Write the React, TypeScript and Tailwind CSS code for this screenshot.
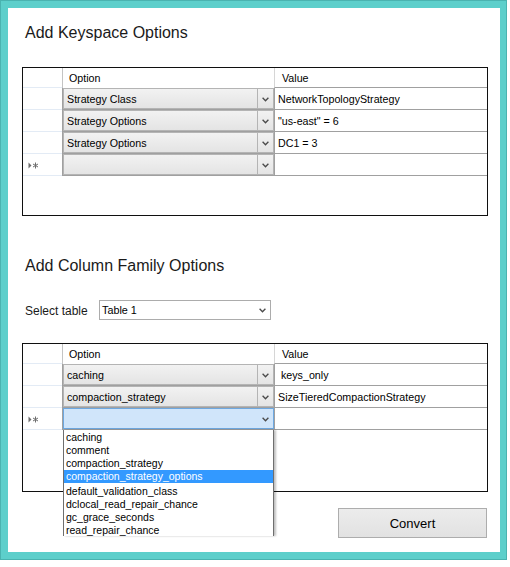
import React from "react";

const Chevron = () => (
  <svg width="7" height="5" viewBox="0 0 7 5">
    <path d="M0.6 0.8 L3.5 3.8 L6.4 0.8" fill="none" stroke="#4a4a4a" strokeWidth="1.3" />
  </svg>
);

const NewRowIcon = () => (
  <svg width="11" height="7" viewBox="0 0 11 7">
    <path d="M0.5 0.5 L0.5 6.5 L3.5 3.5 Z" fill="#6e6e6e" />
    <g stroke="#6e6e6e" strokeWidth="1">
      <line x1="7.5" y1="0.5" x2="7.5" y2="6.5" />
      <line x1="5" y1="2" x2="10" y2="5" />
      <line x1="5" y1="5" x2="10" y2="2" />
    </g>
  </svg>
);

type Row = { option: string; value: string; newRow?: boolean; selected?: boolean };

const GridRow = ({ option, value, newRow, selected }: Row) => (
  <div className="flex h-[22px]">
    <div className="w-[39px] border-b border-[#e3ebf5] flex items-center pl-[5px] pt-[1px]">
      {newRow && <NewRowIcon />}
    </div>
    <div className="w-[212px] border-l border-b border-[#a0a0a0]">
      <div
        className={
          selected
            ? "h-full flex border border-[#6ea8e0] bg-[#d0e5fa]"
            : "h-full flex border border-[#b4b4b4] bg-gradient-to-b from-[#f2f2f2] to-[#e4e4e4]"
        }
      >
        <div className="flex-1 pl-[3px] pt-[1px] flex items-center whitespace-nowrap overflow-hidden">{option}</div>
        <div
          className={
            selected
              ? "w-[16px] flex items-center justify-center pt-[1px]"
              : "w-[16px] border-l border-[#b4b4b4] flex items-center justify-center pt-[1px]"
          }
        >
          <Chevron />
        </div>
      </div>
    </div>
    <div className="w-[213px] border-l border-b border-[#a0a0a0] pl-[3px] pt-[1px] flex items-center whitespace-pre">
      {value}
    </div>
  </div>
);

const Grid = ({ rows, children }: { rows: Row[]; children?: React.ReactNode }) => (
  <div className="relative w-[466px] h-[149px] border border-[#101010] bg-white flex flex-col text-[10.7px] text-black">
    <div className="flex h-[20px]">
      <div className="w-[39px] border-b border-[#e3ebf5]" />
      <div className="w-[212px] border-l border-[#c4c4c4] pl-[6px] pt-[1px] flex items-center">Option</div>
      <div className="w-[213px] border-l border-b border-[#d6d6d6] border-b-[#a0a0a0] pl-[7px] pt-[1px] flex items-center">
        Value
      </div>
    </div>
    {rows.map((r, i) => (
      <GridRow key={i} {...r} />
    ))}
    {children}
  </div>
);

const listItems = [
  "caching",
  "comment",
  "compaction_strategy",
  "compaction_strategy_options",
  "default_validation_class",
  "dclocal_read_repair_chance",
  "gc_grace_seconds",
  "read_repair_chance",
];

export default function App() {
  return (
    <div className="font-['Liberation_Sans',Arial,sans-serif] bg-white w-[510px] h-[567px]">
      <div className="w-[507px] h-[560px] border border-[#4ab3b0] bg-[#5dcfcb] pl-[7px] pt-[7px]">
        <div className="w-[492px] h-[544px] bg-white pl-[14px] flex flex-col">
          <div className="mt-[15px] h-[20px] leading-[20px] pl-[3px] text-[16px] text-[#1a1a1a]">
            Add Keyspace Options
          </div>
          <div className="mt-[24px]">
            <Grid
              rows={[
                { option: "Strategy Class", value: "NetworkTopologyStrategy" },
                { option: "Strategy Options", value: "\"us-east\" = 6" },
                { option: "Strategy Options", value: "DC1 = 3" },
                { option: "", value: "", newRow: true },
              ]}
            />
          </div>
          <div className="mt-[40px] h-[20px] leading-[20px] pl-[3px] text-[16px] text-[#1a1a1a]">
            Add Column Family Options
          </div>
          <div className="mt-[24px] h-[20px] flex items-center">
            <div className="w-[77px] pl-[3px] pt-[1px] text-[12px] text-[#1a1a1a]">Select table</div>
            <div className="w-[172px] h-[20px] border border-[#acacac] bg-white flex items-center text-[10.8px]">
              <div className="flex-1 pl-[2px] pt-[1px]">Table 1</div>
              <div className="w-[16px] flex items-center justify-center">
                <Chevron />
              </div>
            </div>
          </div>
          <div className="mt-[23px]">
            <Grid
              rows={[
                { option: "caching", value: " keys_only" },
                { option: "compaction_strategy", value: "SizeTieredCompactionStrategy" },
                { option: "", value: "", newRow: true, selected: true },
              ]}
            >
              <div className="absolute left-[40px] top-[86px] w-[211px] h-[106px] pt-[1px] bg-white border-l border-r border-[#6e6e6e] shadow-[2px_0_2px_rgba(0,0,0,0.25)] text-[10.5px] z-10">
                {listItems.map((it) => (
                  <div
                    key={it}
                    className={
                      it === "compaction_strategy_options"
                        ? "h-[13px] leading-[13px] pl-[2px] bg-[#3399ff] text-white mb-[2px] whitespace-nowrap"
                        : "h-[13px] leading-[13px] pl-[2px] text-black whitespace-nowrap"
                    }
                  >
                    {it}
                  </div>
                ))}
              </div>
            </Grid>
          </div>
          <div className="mt-[16px] w-[466px] flex justify-end">
            <div className="w-[149px] h-[30px] mr-[1px] pt-[1px] border border-[#adadad] bg-gradient-to-b from-[#ececec] to-[#e2e2e2] flex items-center justify-center text-[13px] text-black">
              Convert
            </div>
          </div>
        </div>
      </div>
    </div>
  );
}
